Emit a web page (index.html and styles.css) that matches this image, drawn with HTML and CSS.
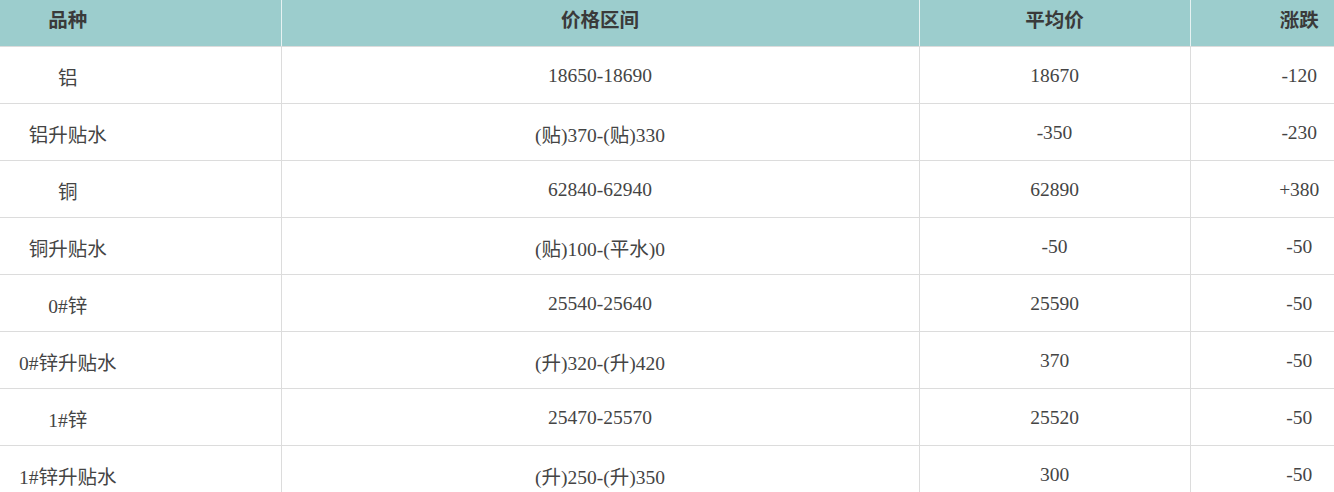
FILE: index.html
```html
<!DOCTYPE html>
<html lang="zh">
<head>
<meta charset="utf-8">
<title>价格表</title>
<link rel="stylesheet" href="styles.css">
</head>
<body>
<table class="price-table">
  <colgroup>
    <col class="c1"><col class="c2"><col class="c3"><col class="c4">
  </colgroup>
  <thead>
    <tr>
      <th class="name">品种</th>
      <th>价格区间</th>
      <th>平均价</th>
      <th class="chg">涨跌</th>
    </tr>
  </thead>
  <tbody>
    <tr><td class="name">铝</td><td>18650-18690</td><td>18670</td><td class="chg">-120</td></tr>
    <tr><td class="name">铝升贴水</td><td>(贴)370-(贴)330</td><td>-350</td><td class="chg">-230</td></tr>
    <tr><td class="name">铜</td><td>62840-62940</td><td>62890</td><td class="chg">+380</td></tr>
    <tr><td class="name">铜升贴水</td><td>(贴)100-(平水)0</td><td>-50</td><td class="chg">-50</td></tr>
    <tr><td class="name">0#锌</td><td>25540-25640</td><td>25590</td><td class="chg">-50</td></tr>
    <tr><td class="name">0#锌升贴水</td><td>(升)320-(升)420</td><td>370</td><td class="chg">-50</td></tr>
    <tr><td class="name">1#锌</td><td>25470-25570</td><td>25520</td><td class="chg">-50</td></tr>
    <tr><td class="name">1#锌升贴水</td><td>(升)250-(升)350</td><td>300</td><td class="chg">-50</td></tr>
  </tbody>
</table>
</body>
</html>
```

FILE: styles.css
```css
html, body {
  margin: 0;
  padding: 0;
  background: #fff;
  overflow: hidden;
}
.price-table {
  width: 1334px;
  border-collapse: collapse;
  table-layout: fixed;
  font-family: "Liberation Serif", "Noto Sans CJK SC", serif;
  font-size: 19.5px;
  color: #444;
}
.c1 { width: 281px; }
.c2 { width: 638px; }
.c3 { width: 271px; }
.c4 { width: 144px; }
.price-table th {
  background: #9ccdcd;
  color: #3a3a3a;
  font-weight: bold;
  height: 46px;
  padding: 0 0 9px 0;
  box-sizing: border-box;
  text-align: center;
  border-left: 1px solid #e6f2f2;
  border-bottom: 1px solid #dcdcdc;
}
.price-table th:first-child { border-left: none; }
.price-table td {
  height: 57px;
  padding: 3px 0 0 0;
  box-sizing: border-box;
  text-align: center;
  border-left: 1px solid #dcdcdc;
  border-bottom: 1px solid #dcdcdc;
}
.price-table td:first-child { border-left: none; }
.price-table .name { padding-right: 145px; }
.price-table .chg { padding-left: 74px; }
```
